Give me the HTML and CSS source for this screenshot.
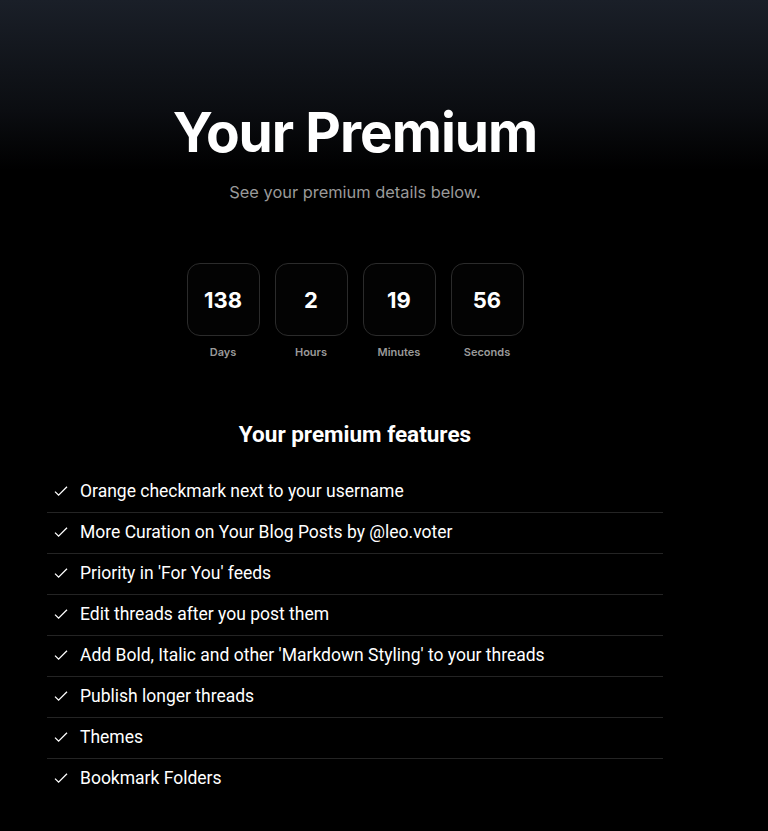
FILE: index.html
```html
<!DOCTYPE html>
<html lang="en">
<head>
<meta charset="utf-8">
<title>Your Premium</title>
<link rel="stylesheet" href="styles.css">
</head>
<body>
<main class="page">
  <section class="hero">
    <h1 class="title">Your Premium</h1>
    <p class="subtitle">See your premium details below.</p>
  </section>
  <section class="countdown">
    <div class="unit"><div class="box">138</div><span class="label">Days</span></div>
    <div class="unit"><div class="box">2</div><span class="label">Hours</span></div>
    <div class="unit"><div class="box">19</div><span class="label">Minutes</span></div>
    <div class="unit"><div class="box">56</div><span class="label">Seconds</span></div>
  </section>
  <section class="features">
    <h2 class="features-title">Your premium features</h2>
    <ul class="list">
      <li class="item"><svg class="check" viewBox="0 0 16 16"><path d="M2 8.6 L5.6 12.2 L14 3.8"/></svg><span>Orange checkmark next to your username</span></li>
      <li class="item"><svg class="check" viewBox="0 0 16 16"><path d="M2 8.6 L5.6 12.2 L14 3.8"/></svg><span>More Curation on Your Blog Posts by @leo.voter</span></li>
      <li class="item"><svg class="check" viewBox="0 0 16 16"><path d="M2 8.6 L5.6 12.2 L14 3.8"/></svg><span>Priority in 'For You' feeds</span></li>
      <li class="item"><svg class="check" viewBox="0 0 16 16"><path d="M2 8.6 L5.6 12.2 L14 3.8"/></svg><span>Edit threads after you post them</span></li>
      <li class="item"><svg class="check" viewBox="0 0 16 16"><path d="M2 8.6 L5.6 12.2 L14 3.8"/></svg><span>Add Bold, Italic and other 'Markdown Styling' to your threads</span></li>
      <li class="item"><svg class="check" viewBox="0 0 16 16"><path d="M2 8.6 L5.6 12.2 L14 3.8"/></svg><span>Publish longer threads</span></li>
      <li class="item"><svg class="check" viewBox="0 0 16 16"><path d="M2 8.6 L5.6 12.2 L14 3.8"/></svg><span>Themes</span></li>
      <li class="item"><svg class="check" viewBox="0 0 16 16"><path d="M2 8.6 L5.6 12.2 L14 3.8"/></svg><span>Bookmark Folders</span></li>
    </ul>
  </section>
</main>
</body>
</html>
```
FILE: styles.css
```css
html, body {
  margin: 0;
  padding: 0;
}
body {
  min-height: 831px;
  background: linear-gradient(to bottom, #1a1f28 0px, #0b0d11 110px, #000 170px, #000 100%);
  color: #fff;
  font-family: Inter, "Noto Sans", sans-serif;
}
.page {
  width: 616px;
  margin-left: 47px;
  padding-top: 98px;
  display: flex;
  flex-direction: column;
  align-items: center;
}
.hero {
  display: flex;
  flex-direction: column;
  align-items: center;
}
.title {
  margin: 0;
  font-size: 55px;
  line-height: 68px;
  font-weight: 700;
  letter-spacing: -1px;
}
.subtitle {
  margin: 14px 0 0;
  font-size: 16.4px;
  line-height: 24px;
  color: #9a9a9a;
}
.countdown {
  margin-top: 59px;
  display: flex;
  gap: 15px;
}
.unit {
  display: flex;
  flex-direction: column;
  align-items: center;
}
.box {
  width: 71px;
  height: 71px;
  border: 1px solid #2b2b2b;
  border-radius: 13px;
  background: #030303;
  display: flex;
  align-items: center;
  justify-content: center;
  font-size: 22px;
  font-weight: 700;
}
.label {
  margin-top: 8px;
  font-size: 11px;
  line-height: 16px;
  font-weight: 600;
  color: #9a9a9a;
}
.features {
  align-self: stretch;
  margin-top: 60px;
  display: flex;
  flex-direction: column;
}
.features-title {
  margin: 0;
  text-align: center;
  font-family: Roboto, "Noto Sans", sans-serif;
  font-size: 22.5px;
  line-height: 28px;
  font-weight: 700;
}
.list {
  list-style: none;
  margin: 24px 0 0;
  padding: 0;
}
.item {
  box-sizing: border-box;
  height: 41px;
  padding: 0 0 3px 6px;
  display: flex;
  align-items: center;
  gap: 11px;
  border-bottom: 1px solid #242424;
  font-family: Roboto, "Noto Sans", sans-serif;
  font-size: 17.5px;
}
.item:last-child {
  border-bottom: none;
}
.check {
  width: 16px;
  height: 16px;
  fill: none;
  stroke: #fff;
  stroke-width: 1.3;
}
```
